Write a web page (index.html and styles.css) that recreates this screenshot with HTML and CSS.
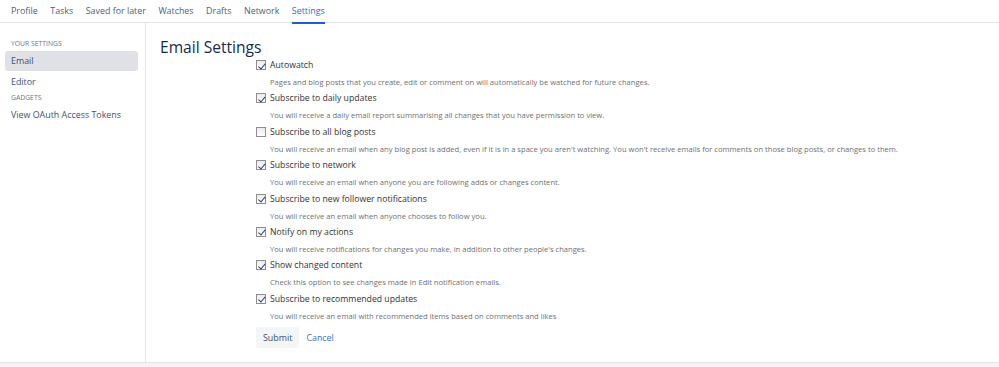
FILE: index.html
```html
<!DOCTYPE html>
<html>
<head>
<meta charset="utf-8">
<link rel="stylesheet" href="styles.css">
</head>
<body>
<div class="page">
  <nav class="tabs">
    <a class="tab">Profile</a>
    <a class="tab">Tasks</a>
    <a class="tab">Saved for later</a>
    <a class="tab">Watches</a>
    <a class="tab">Drafts</a>
    <a class="tab">Network</a>
    <a class="tab active">Settings</a>
  </nav>
  <div class="layout">
    <aside class="sidebar">
      <div class="side-head first">YOUR SETTINGS</div>
      <a class="side-item selected">Email</a>
      <a class="side-item">Editor</a>
      <div class="side-head">GADGETS</div>
      <a class="side-item">View OAuth Access Tokens</a>
    </aside>
    <main class="content">
      <h1 class="title">Email Settings</h1>
      <form class="form">
        <div class="row">
          <label class="label"><span class="cb checked"></span>Autowatch</label>
          <div class="desc">Pages and blog posts that you create, edit or comment on will automatically be watched for future changes.</div>
        </div>
        <div class="row">
          <label class="label"><span class="cb checked"></span>Subscribe to daily updates</label>
          <div class="desc">You will receive a daily email report summarising all changes that you have permission to view.</div>
        </div>
        <div class="row">
          <label class="label"><span class="cb"></span>Subscribe to all blog posts</label>
          <div class="desc">You will receive an email when any blog post is added, even if it is in a space you aren't watching. You won't receive emails for comments on those blog posts, or changes to them.</div>
        </div>
        <div class="row">
          <label class="label"><span class="cb checked"></span>Subscribe to network</label>
          <div class="desc">You will receive an email when anyone you are following adds or changes content.</div>
        </div>
        <div class="row">
          <label class="label"><span class="cb checked"></span>Subscribe to new follower notifications</label>
          <div class="desc">You will receive an email when anyone chooses to follow you.</div>
        </div>
        <div class="row">
          <label class="label"><span class="cb checked"></span>Notify on my actions</label>
          <div class="desc">You will receive notifications for changes you make, in addition to other people's changes.</div>
        </div>
        <div class="row">
          <label class="label"><span class="cb checked"></span>Show changed content</label>
          <div class="desc">Check this option to see changes made in Edit notification emails.</div>
        </div>
        <div class="row">
          <label class="label"><span class="cb checked"></span>Subscribe to recommended updates</label>
          <div class="desc">You will receive an email with recommended items based on comments and likes</div>
        </div>
        <div class="buttons">
          <span class="btn">Submit</span>
          <a class="cancel">Cancel</a>
        </div>
      </form>
    </main>
  </div>
  <div class="footer"></div>
</div>
</body>
</html>
```
FILE: styles.css
```css
* { box-sizing: border-box; }
html, body { margin: 0; padding: 0; background: #fff; }
body {
  font-family: "Open Sans", "Noto Sans", sans-serif;
  color: #333;
  width: 999px;
  height: 367px;
  overflow: hidden;
}
.page { display: flex; flex-direction: column; height: 367px; }
.tabs {
  display: flex;
  height: 23px;
  padding-left: 11px;
  border-bottom: 1px solid #e4e5e8;
  gap: 12.5px;
}
.tab {
  font-size: 8.9px;
  color: #505f79;
  line-height: 22px;
  height: 23px;
  position: relative;
}
.tab.active { color: #2f6fd0; }
.tab.active::after {
  content: "";
  position: absolute;
  left: 0; right: 0; bottom: -1px;
  height: 2px;
  background: #1f5fcc;
}
.layout { display: flex; flex: 1; min-height: 0; }
.sidebar {
  width: 146px;
  border-right: 1px solid #e4e5e8;
  padding: 15px 7px 0 5px;
  display: flex;
  flex-direction: column;
}
.side-head {
  font-size: 6.8px;
  color: #6b778c;
  padding-left: 6px;
  line-height: 12px;
}
.side-item {
  font-size: 8.9px;
  color: #42526e;
  padding-left: 6px;
  line-height: 20px;
  height: 20px;
  border-radius: 3px;
  margin-top: 1px;
}
.side-item.selected { background: #dfe1e6; margin-top: 1px; }
.content { flex: 1; padding: 14px 0 0 14px; }
.title {
  margin: 0;
  font-weight: normal;
  font-size: 15.6px;
  line-height: 21px;
  color: #172b4d;
}
.form { margin-left: 96px; margin-top: -1px; }
.row { height: 33.4px; }
.label {
  display: flex;
  align-items: center;
  font-size: 8.7px;
  line-height: 16px;
  height: 16px;
  color: #333;
}
.cb {
  width: 10px; height: 10px;
  border: 1px solid #8e8e8e;
  background: linear-gradient(#ececec, #fdfdfd);
  margin-right: 4px;
  position: relative;
  flex: none;
}
.cb.checked::after {
  content: "";
  position: absolute;
  left: 2.5px; top: 0.5px;
  width: 2.5px; height: 5.5px;
  border: solid #2a3f8a;
  border-width: 0 1.5px 1.5px 0;
  transform: rotate(40deg);
}
.desc {
  font-size: 7.6px;
  color: #707070;
  padding-left: 14px;
  line-height: 18px;
  white-space: nowrap;
}
.buttons {
  display: flex;
  align-items: center;
  gap: 7px;
  margin-top: 3px;
}
.btn {
  font-size: 8.9px;
  background: #f4f5f7;
  color: #42526e;
  height: 21px;
  line-height: 21px;
  padding: 0 7px;
  border-radius: 3px;
}
.cancel { font-size: 8.9px; color: #3a6fc4; }
.footer {
  height: 5px;
  border-top: 1px solid #e4e5e8;
  background: #f4f5f7;
}
```
